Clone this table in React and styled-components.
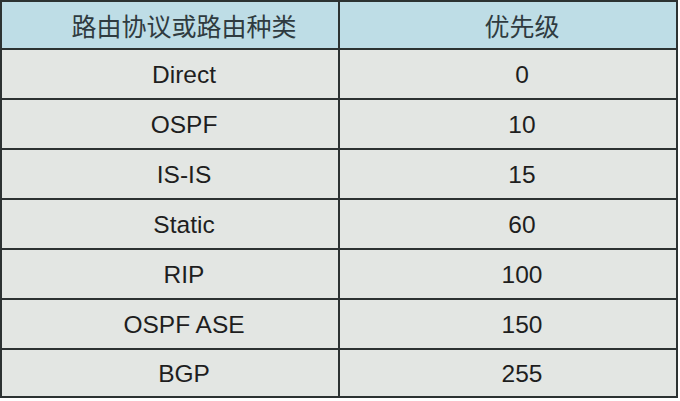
import React from 'react';
import styled, { createGlobalStyle } from 'styled-components';

const GlobalStyle = createGlobalStyle`
  html, body {
    margin: 0;
    padding: 0;
    background: #ffffff;
  }
`;

const Table = styled.table`
  width: 678px;
  border-collapse: collapse;
  border: 2px solid #2c3232;
  font-family: "Liberation Sans", Arial, "Noto Sans CJK SC", sans-serif;
  table-layout: fixed;
`;

const HeadCell = styled.th`
  height: 46px;
  padding: 0 0 0 28px;
  background: #bedde6;
  border: 2px solid #2c3232;
  font-family: "Noto Sans CJK SC", "Liberation Sans", sans-serif;
  font-weight: 400;
  font-size: 25px;
  color: #2f3b40;
  text-align: center;
`;

const Cell = styled.td`
  height: ${props => props.h || 48}px;
  padding: 2px 0 0 28px;
  background: #e3e6e3;
  border: 2px solid #2c3232;
  border-top-color: #4a5252;
  font-size: 24.5px;
  color: #1e1e1e;
  text-align: center;
`;

const routes = [
  ['Direct', '0'],
  ['OSPF', '10'],
  ['IS-IS', '15'],
  ['Static', '60'],
  ['RIP', '100'],
  ['OSPF ASE', '150'],
  ['BGP', '255'],
];

export default function App() {
  return (
    <>
      <GlobalStyle />
      <Table>
        <thead>
          <tr>
            <HeadCell>路由协议或路由种类</HeadCell>
            <HeadCell>优先级</HeadCell>
          </tr>
        </thead>
        <tbody>
          {routes.map(([name, pref], i) => (
            <tr key={name}>
              <Cell h={i === routes.length - 1 ? 44 : 46}>{name}</Cell>
              <Cell h={i === routes.length - 1 ? 44 : 46}>{pref}</Cell>
            </tr>
          ))}
        </tbody>
      </Table>
    </>
  );
}
